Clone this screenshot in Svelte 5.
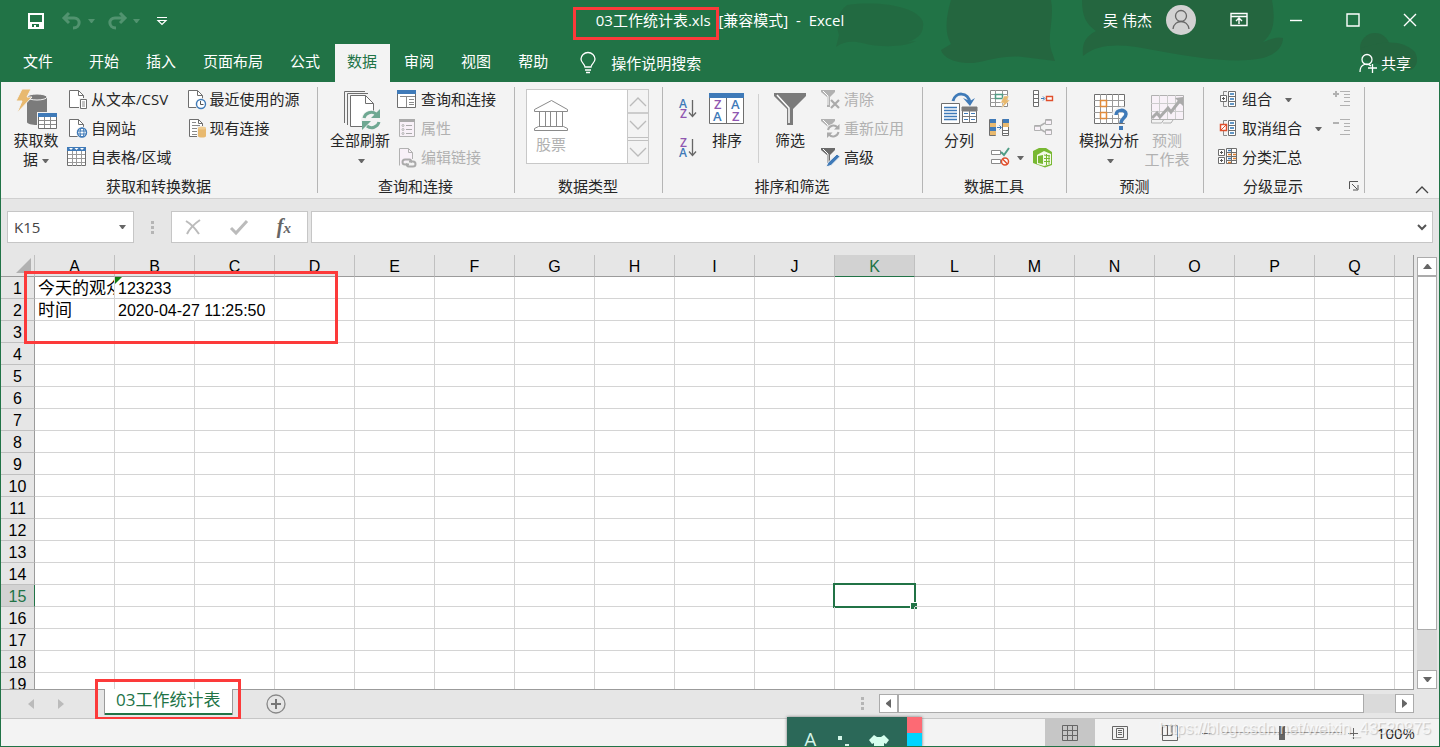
<script lang="ts">
  interface ITool {
    icon: string;
    label: string;
    disabled?: boolean;
    caret?: boolean;
  }

  const tabs = ["文件", "开始", "插入", "页面布局", "公式", "数据", "审阅", "视图", "帮助"];
  const columns = "ABCDEFGHIJKLMNOPQRSTUV".split("");
  const rows = Array.from({ length: 36 }, (_, i) => i + 1);
  const cells: Record<string, string> = {
    A1: "今天的观众",
    B1: "123233",
    A2: "时间",
    B2: "2020-04-27 11:25:50",
  };

  let activeTab = $state("数据");
  let activeCol = $state("K");
  let activeRow = $state(15);
  let view = $state("normal");
  let zoom = $state(100);

  const importTools: ITool[] = [
    { icon: "csv", label: "从文本/CSV" },
    { icon: "web", label: "自网站" },
    { icon: "range", label: "自表格/区域" },
  ];
  const sourceTools: ITool[] = [
    { icon: "recent", label: "最近使用的源" },
    { icon: "existing", label: "现有连接" },
  ];
  const queryTools: ITool[] = [
    { icon: "queries", label: "查询和连接" },
    { icon: "props", label: "属性", disabled: true },
    { icon: "links", label: "编辑链接", disabled: true },
  ];
  const filterTools: ITool[] = [
    { icon: "clear", label: "清除", disabled: true },
    { icon: "reapply", label: "重新应用", disabled: true },
    { icon: "advanced", label: "高级" },
  ];
  const outlineTools: ITool[] = [
    { icon: "group", label: "组合", caret: true },
    { icon: "ungroup", label: "取消组合", caret: true },
    { icon: "subtotal", label: "分类汇总" },
  ];

  const page = `<path d="M3.500 1.500h9l5 5v12h-14z" fill="#fff" stroke="#6e6e6e"/><path d="M12.500 1.500v5h5" fill="none" stroke="#6e6e6e"/>`;
  const funnel = (c: string) =>
    `<path d="M2 1h14v2l-5 5v10H8V8L2 3z" fill="${c}"/><path d="M4 2l5 5v9" fill="none" stroke="#fff"/>`;
  const bracket = `<path d="M10 2.500H6.500V6M6.500 13v4.500H10" fill="none" stroke="#8a8a8a"/><path d="M11.500 2.500h7v15h-7z" fill="#fff" stroke="#6e6e6e"/><path d="M11 7.500h8M11 12.500h8" stroke="#6e6e6e"/><path d="M13 5h4M13 10h4M13 15h4" stroke="#2f75b5" stroke-width="1.300"/>`;

  // 22 x 21 icons
  const small: Record<string, string> = {
    csv: `${page}<path d="M13 9h9v12h-9z" fill="#f3f3f3"/><path d="M14.500 10.500h6v9h-6z" fill="#fff" stroke="#6e6e6e"/><path d="M16 13h3M16 15h3M16 17h3" stroke="#8a8a8a"/>`,
    web: `${page}<circle cx="16" cy="14.500" r="6" fill="#f3f3f3"/><circle cx="16" cy="14.500" r="4.500" fill="#fff" stroke="#3f7ab8" stroke-width="1.400"/><ellipse cx="16" cy="14.500" rx="2" ry="4.500" fill="none" stroke="#3f7ab8"/><path d="M11.500 13h9M11.500 16h9" stroke="#3f7ab8"/>`,
    range: `<path d="M1.500.5h18v18h-18z" fill="#fff" stroke="#6e6e6e"/><path d="M1 0h19v4H1z" fill="#3f7ab8"/><path d="M3 1h4l-2 2zM8.500 1h4l-2 2zM14 1h4l-2 2z" fill="#fff"/><path d="M6.500 4v15M10.500 4v15M15.500 4v15M2 7.500h17M2 11.500h17M2 15.500h17" stroke="#9a9a9a"/>`,
    recent: `${page}<circle cx="16" cy="15" r="6" fill="#f3f3f3"/><circle cx="16" cy="15" r="4.500" fill="#fff" stroke="#3f7ab8" stroke-width="1.400"/><path d="M15.500 12v3.500h3" fill="none" stroke="#555"/>`,
    existing: `<path d="M4.500 1.500h9l4 4v13h-13z" fill="#fff" stroke="#6e6e6e"/><path d="M13.500 1.500v4h4" fill="none" stroke="#6e6e6e"/><path d="M7 4.500h4M7 7.500h8M7 10.500h5M7 13.500h5M7 16.500h5" stroke="#8a8a8a"/><path d="M12 8h10v12H12z" fill="#f3f3f3"/><path d="M13 10v8c0 2 8 2 8 0v-8z" fill="#e8b96f"/><ellipse cx="17" cy="10" rx="4" ry="1.500" fill="#f0cd92"/>`,
    queries: `<path d="M1.500 1.500h18v17h-18z" fill="#fff" stroke="#6e6e6e"/><path d="M1 1h19v4H1z" fill="#3f7ab8"/><path d="M4 7.500h15M10.500 8v10M13 10.500h5M13 13.500h5M13 15.500h5" stroke="#8a8a8a"/>`,
    props: `<path d="M3.500 1.500h15v17h-15z" fill="#f8f1f8" stroke="#b1b1b1"/><path d="M3 1h16v3H3z" fill="#aaa"/><path d="M10 7.500h6M10 11.500h6M10 15.500h6" stroke="#aaa"/><g fill="none" stroke="#b1b1b1"><circle cx="7" cy="7.500" r="1"/><circle cx="7" cy="11.500" r="1"/><circle cx="7" cy="15.500" r="1"/></g>`,
    links: `<path d="M3.500 18.500v-17h9l4 4V12" fill="#f8f1f8" stroke="#b1b1b1"/><path d="M12.500 1.500v4h4" fill="none" stroke="#b1b1b1"/><g fill="none" stroke="#aaa" stroke-width="2"><path d="M13 17.500H9a2.500 2.500 0 010-5h4a2 2 0 012 3"/><path d="M13 14.500h4a2.500 2.500 0 010 5h-4a2 2 0 01-2-3"/></g>`,
    clear: `${funnel("#b1b1b1")}<path d="M12 11l8 8M20 11l-8 8" stroke="#aaa" stroke-width="2.200"/>`,
    reapply: `${funnel("#b1b1b1")}<circle cx="14" cy="13" r="7" fill="#f3f3f3"/><g fill="none" stroke="#aaa" stroke-width="2"><path d="M9 12a5.500 5.500 0 019.500-2.500M19.500 14a5.500 5.500 0 01-9.500 2.500"/></g><path d="M20.500 6v5.500H15zM8 20v-5.500h5.500z" fill="#aaa"/>`,
    advanced: `${funnel("#6a6a6a")}<path d="M7 20l2-4.500L18 7l3 2.500-9 9z" fill="#3f7ab8" stroke="#f3f3f3"/>`,
    group: `${bracket}<path d="M3.500 6.500h6v6h-6z" fill="#fff" stroke="#6e6e6e"/><path d="M5 9.500h3M6.500 8v3" stroke="#555"/>`,
    ungroup: `${bracket}<path d="M3.500 6.500h6v6h-6z" fill="#fff" stroke="#e04f2c" stroke-width="1.500"/><path d="M4 12l5-5" stroke="#e04f2c"/>`,
    subtotal: `<path d="M1.500 2.500h6v6h-6zM1.500 10.500h6v6h-6z" fill="#fff" stroke="#6e6e6e"/><path d="M3 5.500h3M4.500 4v3M3 13.500h3M4.500 12v3" stroke="#555"/><path d="M9.500 1.500h10v15h-10z" fill="#fff" stroke="#6e6e6e"/><path d="M14.500 1v16M9 5.500h11M9 9.500h11M9 13.500h11" stroke="#6e6e6e"/><path d="M11 3.500h3M11 11.500h3" stroke="#3f7ab8" stroke-width="1.500"/><path d="M11 7.500h3M16 7.500h3M11 15.500h3M16 11.500h3" stroke="#e08030" stroke-width="1.500"/>`,
    flash: `<path d="M1.500 1.500h17v16h-17z" fill="#fff" stroke="#8a8a8a"/><path d="M6.500 1v17M1 5.500h18M1 9.500h18M1 13.500h18M13.500 1v17" stroke="#9a9a9a"/><path d="M6.500 5.500h7v4h-7z" fill="#fff" stroke="#4f9d85" stroke-width="1.500"/><path d="M15 7h5l-2 4h3l-9 9 2.500-6h-3z" fill="#e8b96f" stroke="#f3f3f3" stroke-width=".5"/>`,
    dedupe: `<path d="M.5 1.500h6v16h-6zM13.500 1.500h6v16h-6z" fill="#fff" stroke="#6e6e6e"/><path d="M1 1h6v4H1zM1 9h6v4H1zM14 1h6v4h-6z" fill="#3f7ab8"/><path d="M1 5h6v4H1zM1 13h6v4H1zM14 5h6v4h-6z" fill="#e8b96f"/><path d="M14 12.500h6M14 15.500h6" stroke="#6e6e6e"/><path d="M8 9.500h4M10.500 7.500l2 2-2 2" fill="none" stroke="#3f7ab8"/>`,
    validate: `<path d="M2.500 3.500h9v4h-9zM2.500 12.500h9v4h-9z" fill="#fff" stroke="#8a8a8a"/><path d="M12 5l3 3 5-7" fill="none" stroke="#4f9d85" stroke-width="2"/><circle cx="16" cy="14.500" r="3.500" fill="#fff" stroke="#e04f2c" stroke-width="1.500"/><path d="M13.500 12l5 5" stroke="#e04f2c" stroke-width="1.500"/>`,
    consolidate: `<path d="M1.500 1.500h5v16h-5zM1 5.500h6M1 9.500h6M1 13.500h6" fill="#fff" stroke="#6e6e6e"/><path d="M9 9.500h3M11 7.500l2 2-2 2" fill="none" stroke="#3f7ab8"/><path d="M14.500 7.500h6v4h-6z" fill="#fff" stroke="#e04f2c" stroke-width="1.400"/>`,
    relations: `<g fill="#f8f1f8" stroke="#b1b1b1"><path d="M8 8l5-3M8 11l5 3" stroke-width="1.500"/><path d="M2.500 7.500h6v5h-6zM13.500 1.500h6v5h-6zM13.500 11.500h6v5h-6z"/></g><path d="M3 8h5M14 2h5M14 12h5" stroke="#aaa" stroke-width="1.500"/>`,
    model: `<path d="M1 4l6-3h7l6 4v13l-7 2.500L1 16z" fill="#78b832"/><path d="M5 8l7-4 7 3v10l-7 2-7-2z" fill="#f3f9e8"/><path d="M6 9l5-1v9l-5-1z" fill="#78b832"/><path d="M8 10l1-1v5M12 8l6 1M12 11.500h6M12 14.500h6M14.500 7v11M17 8v9" stroke="#78b832" fill="none"/>`,
    expand: `<path d="M1 5h6M4 2v6" stroke="#b1b1b1" stroke-width="2"/><path d="M8 2.500h10M12 5.500h6M12 8.500h6M12 12.500h6M8 16.500h10" stroke="#b1b1b1"/>`,
    collapse: `<path d="M1 5h6" stroke="#b1b1b1" stroke-width="2"/><path d="M8 1.500h10M12 5.500h6M12 8.500h6M12 12.500h6M8 16.500h10" stroke="#b1b1b1"/>`,
    sortAz: `<g font-family="Open Sans, sans-serif" font-size="12" font-weight="600"><text x="3" y="9" fill="#3f7ab8">A</text><text x="4" y="19" fill="#9057b0">Z</text></g><path d="M16.500 1v16M13 13.500l3.500 4 3.500-4" fill="none" stroke="#666" stroke-width="1.300"/>`,
    sortZa: `<g font-family="Open Sans, sans-serif" font-size="12" font-weight="600"><text x="4" y="9" fill="#9057b0">Z</text><text x="3" y="19" fill="#3f7ab8">A</text></g><path d="M16.500 1v16M13 13.500l3.500 4 3.500-4" fill="none" stroke="#666" stroke-width="1.300"/>`,
  };

  // 44 x 44 icons
  const big: Record<string, string> = {
    getData: `<path d="M13 10v25c0 4 20 4 20 0V10z" fill="#7b7b7b"/><ellipse cx="23" cy="10" rx="10" ry="3" fill="#7b7b7b" stroke="#f3f3f3"/><path d="M8 2h9l-4 8h5L3 26l5-12H2z" fill="#e8b96f" stroke="#f3f3f3"/><path d="M23 25h21v19H23z" fill="#f3f3f3"/><path d="M24.500 26.500h18v15h-18z" fill="#fff" stroke="#6e6e6e"/><path d="M24 26h19v4H24z" fill="#3f7ab8"/><path d="M30.500 30v11M36.500 30v11M25 33.500h17M25 37.500h17" stroke="#8a8a8a"/>`,
    refresh: `<path d="M6.500 36V4.500H27M9.500 38V6.500H30" fill="none" stroke="#6e6e6e"/><path d="M12.500 8.500h15l8 8v23h-23z" fill="#fff" stroke="#6e6e6e"/><path d="M27.500 8.500v8h8" fill="none" stroke="#6e6e6e"/><circle cx="33" cy="33" r="10" fill="#f3f3f3"/><g fill="none" stroke="#6fa892" stroke-width="3"><path d="M26 31a7.500 7.500 0 0112-4M41 35a7.500 7.500 0 01-12 4"/></g><path d="M42 22v9h-9zM24 43v-9h9z" fill="#6fa892"/>`,
    sort: `<path d="M4.500 6.500h34v30h-34z" fill="#fff" stroke="#6e6e6e"/><path d="M4 6h35v5H4z" fill="#3f7ab8"/><path d="M21.500 11v26" stroke="#6e6e6e"/><g font-family="Open Sans, sans-serif" font-size="13" font-weight="600"><text x="9" y="22" fill="#9057b0">Z</text><text x="8" y="34" fill="#3f7ab8">A</text><text x="26" y="22" fill="#3f7ab8">A</text><text x="27" y="34" fill="#9057b0">Z</text></g>`,
    filter: `<path d="M6 6h32v3L25 22v16h-6V22L6 9z" fill="#7b7b7b"/><path d="M9 8l12 13v15" fill="none" stroke="#fff" stroke-width="1.500"/>`,
    split: `<path d="M4.500 16.500h18v20h-18z" fill="#fff" stroke="#6e6e6e"/><path d="M7 20.500h13M7 23.500h13M7 26.500h13M7 29.500h13M7 32.500h13" stroke="#3f7ab8" stroke-width="1.300"/><path d="M25.500 21.500h14v14h-14z" fill="#fff" stroke="#6e6e6e"/><path d="M25 20h15v4H25zM32.500 24v12M26 29.500h13" fill="#7b7b7b" stroke="#7b7b7b"/><path d="M27 26.500h4M34 26.500h4M27 32.500h4M34 32.500h4" stroke="#3f7ab8"/><path d="M16 14c2-9 15-10 17 2" fill="none" stroke="#3f7ab8" stroke-width="3"/><path d="M26 11l7 8 5-8-5 3z" fill="#3f7ab8"/>`,
    whatIf: `<path d="M7.500 7.500h30v29h-30z" fill="#fff" stroke="#6e6e6e"/><path d="M13.500 7v30M19.500 7v30M25.500 7v30M31.500 7v30M7 13.500h31M7 19.500h31M7 25.500h31M7 31.500h31" stroke="#9a9a9a"/><path d="M13.500 13.500h6v6h-6zM13.500 25.500h6v6h-6z" fill="#fff" stroke="#e08b3c" stroke-width="1.500"/><path d="M28 28c0-7 12-7 12-1 0 4-5 4-5 9" fill="none" stroke="#f3f3f3" stroke-width="6"/><path d="M29 28c0-6 10-6 10-1 0 4-5 4-5 9" fill="none" stroke="#3f7ab8" stroke-width="3.500"/><path d="M32 39h4v4h-4z" fill="#3f7ab8"/>`,
    forecast: `<path d="M6.500 8.500h32v24h-32z" fill="#f8f1f8" stroke="#b1b1b1"/><path d="M14.500 8v24M22.500 8v24M30.500 8v24M6 16.500h32M6 24.500h32" stroke="#ccc"/><path d="M7 31l5-5 3 4 8-9 3 4 10-13" fill="none" stroke="#aaa" stroke-width="3"/><path d="M38 10v9l-8-8z" fill="#aaa"/><path d="M6.500 33v3h10l2-3M18 36h8l2-3" fill="none" stroke="#b1b1b1"/>`,
  };
</script>

{#snippet caret()}
  <svg class="caret" viewBox="0 0 7 4" aria-hidden="true"><path d="M0 0h7L4 4H3z" fill="currentColor" /></svg>
{/snippet}

{#snippet smallIcon(name: string)}
  <svg class="small-icon" viewBox="0 0 22 21" aria-hidden="true">{@html small[name]}</svg>
{/snippet}

{#snippet bigIcon(name: string)}
  <svg class="big-icon" viewBox="0 0 44 44" aria-hidden="true">{@html big[name]}</svg>
{/snippet}

{#snippet toolList(tools: ITool[])}
  <div class="tools">
    {#each tools as tool (tool.icon)}
      <button class="tool" disabled={tool.disabled}>
        {@render smallIcon(tool.icon)}
        <span>{tool.label}</span>
        {#if tool.caret}{@render caret()}{/if}
      </button>
    {/each}
  </div>
{/snippet}

<div class="window">
  <header>
    <svg class="art" viewBox="0 0 640 82" aria-hidden="true">
      <g fill="#24663f">
        <path d="M48 5c-10 8-12 18-8 30l-3 12c8-6 16-6 26-4 20 5 42 4 54-2l-8 1c12-4 16-10 15-20C120 8 84 0 48 5z" opacity=".7" />
        <path d="M152 0c-6 20-6 34 0 44l-10 6c2 8 16 14 32 13 16-2 30-8 50-6l32 4-2-6c-8-18 2-34-2-55z" />
        <path d="M283 0c0 16 4 24 14 31-12 6-14 14-13 25 16-14 42-12 70-6 42 8 84 14 110 8 14-4 20-12 20-20-8-2-12 2-20 4 12-10 12-24 9-42z" />
        <circle cx="576" cy="48" r="15" />
        <path d="M562 48c24-8 42-8 54 4 4 8 2 14-4 18-20 0-50-8-50-22z" />
      </g>
    </svg>
    <div class="titlebar">
      <div class="quick">
        <button class="save" aria-label="保存">
          <svg width="18" height="18" viewBox="0 0 18 18"><path d="M1 1h16v16H1zM3 3v7h12V3zM5 12v3h2v-2h2v2h3v-3z" fill="#fff" fill-rule="evenodd" /></svg>
        </button>
        <button class="faded undo" aria-label="撤消">
          <svg width="20" height="18" viewBox="0 0 20 18"><path d="M7 1L2 6l5 5M2 6h10c7 0 7 10-1 10" fill="none" stroke="currentColor" stroke-width="3" /></svg>
          {@render caret()}
        </button>
        <button class="faded redo" aria-label="恢复">
          <svg width="20" height="18" viewBox="0 0 20 18"><path d="M13 1l5 5-5 5M18 6H8C1 6 1 16 9 16" fill="none" stroke="currentColor" stroke-width="3" /></svg>
          {@render caret()}
        </button>
        <button class="customize" aria-label="自定义快速访问工具栏">
          <svg width="12" height="10" viewBox="0 0 12 10"><path d="M1 1.500h10M2 4.500h8L6 8.500z" fill="none" stroke="#fff" stroke-width="1.200" /></svg>
        </button>
      </div>
      <h1>03工作统计表.xls&nbsp; [兼容模式]&nbsp; -&nbsp; Excel</h1>
      <div class="account">
        <span>吴 伟杰</span>
        <svg width="30" height="30" viewBox="0 0 30 30" aria-hidden="true"><circle cx="15" cy="15" r="15" fill="#d2d2d2" /><g fill="none" stroke="#666" stroke-width="1.300"><circle cx="15" cy="11" r="5.500" /><path d="M7 24c1-10 15-10 16 0" /></g></svg>
        <div class="controls">
          <button aria-label="功能区显示选项"><svg viewBox="0 0 18 18"><path d="M1 2.500h16v12H1zM1 5.500h16M9 13V7.500M6 10l3-3 3 3" /></svg></button>
          <button aria-label="最小化"><svg viewBox="0 0 18 18"><path d="M3 9.500h12" /></svg></button>
          <button aria-label="最大化"><svg viewBox="0 0 18 18"><path d="M3 3h12v12H3z" /></svg></button>
          <button aria-label="关闭"><svg viewBox="0 0 18 18"><path d="M3 3l12 12M15 3L3 15" /></svg></button>
        </div>
      </div>
    </div>
    <nav>
      {#each tabs as tab (tab)}
        <button class="tab" class:active={tab === activeTab} onclick={() => (activeTab = tab)}>{tab}</button>
      {/each}
      <button class="tell-me">
        <svg width="18" height="22" viewBox="0 0 18 22" aria-hidden="true"><path d="M6 15c0-3-4-4-4-8a7 6.500 0 0114 0c0 4-4 5-4 8zM6 18h6M7 20.500h4" fill="none" stroke="#fff" stroke-width="1.300" /></svg>
        操作说明搜索
      </button>
      <button class="share">
        <svg width="20" height="20" viewBox="0 0 20 20" aria-hidden="true"><path d="M2 19c0-9 8-9 11-6M10 15h9M14.500 11v9" fill="none" stroke="#fff" stroke-width="1.300" /><circle cx="9" cy="6.500" r="5" fill="none" stroke="#fff" stroke-width="1.300" /></svg>
        共享
      </button>
    </nav>
  </header>

  <section class="ribbon">
    <div class="panel import">
      <div class="body">
        <button class="big">{@render bigIcon("getData")}<span>获取数<br />据 {@render caret()}</span></button>
        {@render toolList(importTools)}
        {@render toolList(sourceTools)}
      </div>
      <div class="caption">获取和转换数据</div>
    </div>
    <div class="divider"></div>

    <div class="panel queries">
      <div class="body">
        <button class="big wide">{@render bigIcon("refresh")}<span>全部刷新<br />{@render caret()}</span></button>
        {@render toolList(queryTools)}
      </div>
      <div class="caption">查询和连接</div>
    </div>
    <div class="divider"></div>

    <div class="panel types">
      <div class="gallery">
        <button class="stock" disabled>
          <svg width="36" height="34" viewBox="0 0 36 34" aria-hidden="true"><path d="M1.500 11.500L18.500 2.500l16 9v2h-33zM1.500 32.500v-2l4-2h25l4 2v2zM6.500 14v14M12.500 14v14M17.500 14v14M23.500 14v14M29.500 14v14" fill="none" stroke="#8a8a8a" /></svg>
          <span>股票</span>
        </button>
        <div class="pager">
          <button disabled aria-label="上一行"><svg viewBox="0 0 20 12"><path d="M2 11l8-8 8 8" /></svg></button>
          <button disabled aria-label="下一行"><svg viewBox="0 0 20 12"><path d="M2 2l8 8 8-8" /></svg></button>
          <button disabled aria-label="更多"><svg viewBox="0 0 20 12"><path d="M2 2l8 8 8-8" /></svg></button>
        </div>
      </div>
      <div class="caption">数据类型</div>
    </div>
    <div class="divider"></div>

    <div class="panel sorting">
      <div class="body">
        <div class="sorts">
          <button aria-label="升序">{@render smallIcon("sortAz")}</button>
          <button aria-label="降序">{@render smallIcon("sortZa")}</button>
        </div>
        <button class="big">{@render bigIcon("sort")}<span>排序</span></button>
        <div class="inner-divider"></div>
        <button class="big">{@render bigIcon("filter")}<span>筛选</span></button>
        {@render toolList(filterTools)}
      </div>
      <div class="caption">排序和筛选</div>
    </div>
    <div class="divider"></div>

    <div class="panel data-tools">
      <div class="body">
        <button class="big">{@render bigIcon("split")}<span>分列</span></button>
        <div class="tools">
          <button class="tool" aria-label="快速填充">{@render smallIcon("flash")}</button>
          <button class="tool" aria-label="删除重复值">{@render smallIcon("dedupe")}</button>
          <button class="tool" aria-label="数据验证">{@render smallIcon("validate")}{@render caret()}</button>
        </div>
        <div class="tools">
          <button class="tool" aria-label="合并计算">{@render smallIcon("consolidate")}</button>
          <button class="tool" aria-label="关系" disabled>{@render smallIcon("relations")}</button>
          <button class="tool" aria-label="管理数据模型">{@render smallIcon("model")}</button>
        </div>
      </div>
      <div class="caption">数据工具</div>
    </div>
    <div class="divider"></div>

    <div class="panel forecast">
      <div class="body">
        <button class="big wide">{@render bigIcon("whatIf")}<span>模拟分析<br />{@render caret()}</span></button>
        <button class="big" disabled>{@render bigIcon("forecast")}<span>预测<br />工作表</span></button>
      </div>
      <div class="caption">预测</div>
    </div>
    <div class="divider"></div>

    <div class="panel outline">
      <div class="body">
        {@render toolList(outlineTools)}
        <div class="tools levels">
          <button class="tool" aria-label="显示明细数据" disabled>{@render smallIcon("expand")}</button>
          <button class="tool" aria-label="隐藏明细数据" disabled>{@render smallIcon("collapse")}</button>
        </div>
      </div>
      <div class="caption">
        <span>分级显示</span>
        <button class="launcher" aria-label="分级显示设置">
          <svg width="10" height="10" viewBox="0 0 10 10"><path d="M.5 8V.5H9M3 3l5 5M9 4v5H4" fill="none" stroke="#555" /></svg>
        </button>
      </div>
    </div>
    <div class="divider"></div>

    <button class="fold" aria-label="折叠功能区">
      <svg width="14" height="8" viewBox="0 0 14 8"><path d="M1 7l6-6 6 6" fill="none" stroke="#444" stroke-width="1.300" /></svg>
    </button>
  </section>

  <section class="formula-bar">
    <div class="name-box">
      <input aria-label="名称框" value="{activeCol}{activeRow}" />
      <button aria-label="名称列表">{@render caret()}</button>
    </div>
    <div class="dots"><i></i><i></i><i></i></div>
    <div class="fx">
      <button aria-label="取消"><svg viewBox="0 0 18 18"><path d="M2 3c5 3 9 7 13 13M16 2C10 6 6 10 3 16" fill="none" stroke="#bbb" stroke-width="2" /></svg></button>
      <button aria-label="输入"><svg viewBox="0 0 18 18"><path d="M1 10l5 5L17 3" fill="none" stroke="#bbb" stroke-width="3" /></svg></button>
      <button class="fn" aria-label="插入函数">f<small>x</small></button>
    </div>
    <div class="formula">
      <input aria-label="编辑栏" />
      <button aria-label="展开编辑栏"><svg width="10" height="8" viewBox="0 0 10 8"><path d="M1 2l4 4 4-4" fill="none" stroke="#555" stroke-width="2" /></svg></button>
    </div>
  </section>

  <main>
    <div class="grid">
      <table>
        <thead>
          <tr>
            <th class="corner"><svg width="15" height="15" viewBox="0 0 15 15" aria-hidden="true"><path d="M15 0v15H0z" fill="#b1b1b1" /></svg></th>
            {#each columns as col (col)}
              <th scope="col" class:picked={col === activeCol}>{col}</th>
            {/each}
          </tr>
        </thead>
        <tbody>
          {#each rows as row (row)}
            <tr>
              <th scope="row" class:picked={row === activeRow}>{row}</th>
              {#each columns as col (col)}
                <td
                  class:han={col === "A"}
                  class:flagged={col + row === "B1"}
                  class:spill={col + row === "B2"}
                  class:current={col === activeCol && row === activeRow}
                  onclick={() => {
                    activeCol = col;
                    activeRow = row;
                  }}>{cells[col + row] ?? ""}</td>
              {/each}
            </tr>
          {/each}
        </tbody>
      </table>
      <div class="mark mark-cells"></div>
    </div>
    <div class="vscroll">
      <button aria-label="向上滚动"><svg viewBox="0 0 9 5"><path d="M0 5l4-5h1l4 5z" fill="#666" /></svg></button>
      <div class="thumb"></div>
      <div class="track"></div>
      <button aria-label="向下滚动"><svg viewBox="0 0 9 5"><path d="M0 0h9L5 5H4z" fill="#666" /></svg></button>
    </div>
  </main>

  <footer>
    <div class="sheets">
      <div class="sheet-nav">
        <button aria-label="上一张工作表"><svg width="6" height="10" viewBox="0 0 6 10"><path d="M6 0v10L0 5z" fill="#bbb" /></svg></button>
        <button aria-label="下一张工作表"><svg width="6" height="10" viewBox="0 0 6 10"><path d="M0 0v10l6-5z" fill="#bbb" /></svg></button>
      </div>
      <div class="sheet-slot">
        <button class="sheet">03工作统计表</button>
        <div class="mark mark-sheet"></div>
      </div>
      <button class="add" aria-label="新工作表">
        <svg width="20" height="20" viewBox="0 0 20 20"><circle cx="10" cy="10" r="9" fill="none" stroke="#888" stroke-width="1.300" /><path d="M5 10h10M10 5v10" stroke="#777" stroke-width="2" /></svg>
      </button>
      <div class="dots"><i></i><i></i><i></i></div>
      <div class="hscroll">
        <button aria-label="向左滚动"><svg viewBox="0 0 5 9"><path d="M5 0v9L0 5V4z" fill="#666" /></svg></button>
        <div class="thumb"></div>
        <div class="track"></div>
        <button aria-label="向右滚动"><svg viewBox="0 0 5 9"><path d="M0 0v9l5-4V4z" fill="#666" /></svg></button>
      </div>
    </div>
    <div class="status">
      <button class="view" class:on={view === "normal"} aria-label="普通" onclick={() => (view = "normal")}>
        <svg viewBox="0 0 18 18"><path d="M1.500 1.500h15v15h-15zM6.500 1v16M11.500 1v16M1 6.500h16M1 11.500h16" /></svg>
      </button>
      <button class="view" class:on={view === "layout"} aria-label="页面布局" onclick={() => (view = "layout")}>
        <svg viewBox="0 0 18 18"><path d="M1.500 2.500h15v13h-15zM5.500 4.500h7v9h-7zM7 6.500h4M7 8.500h4M7 10.500h4" /></svg>
      </button>
      <button class="view" class:on={view === "break"} aria-label="分页预览" onclick={() => (view = "break")}>
        <svg viewBox="0 0 18 18"><path d="M1.500 1.500h15v15h-15zM1 11.500h10v-10M6.500 2v9" /></svg>
      </button>
      <button class="step minus" aria-label="缩小" onclick={() => (zoom -= 10)}><svg viewBox="0 0 12 12"><path d="M1 6.500h10" /></svg></button>
      <input type="range" aria-label="显示比例" min="10" max="190" bind:value={zoom} />
      <button class="step" aria-label="放大" onclick={() => (zoom += 10)}><svg viewBox="0 0 12 12"><path d="M1 6.500h10M6.500 1v11" /></svg></button>
      <span class="percent">{zoom}%</span>
      <div class="watermark">https://blog.csdn.net/weixin_43520875</div>
    </div>
    <div class="ime">
      <div class="ime-keys">
        <span>A</span>
        <svg width="18" height="18" viewBox="0 0 18 18" aria-hidden="true"><path d="M4 2h4v4H4zM11 10h4v4h-4z" fill="#d5f5e8" /></svg>
        <svg width="20" height="18" viewBox="0 0 20 18" aria-hidden="true"><path d="M5 1l3 2h4l3-2 5 5-3 4-2-1v9H5V9l-2 1-3-4z" fill="#d5ffee" /></svg>
      </div>
      <div class="ime-side"></div>
    </div>
  </footer>
  <div class="mark mark-title"></div>
</div>

<style>
  :global(body) {
    margin: 0;
    overflow: hidden;
  }

  .window {
    position: relative;
    display: flex;
    flex-direction: column;
    box-sizing: border-box;
    height: 100vh;
    border: 1px solid #217346;
    border-top: 0;
    background: #e6e6e6;
    color: #262626;
    font: 15px/20px "Open Sans", "Noto Sans CJK SC", sans-serif;
    overflow: hidden;
  }
  .window * {
    box-sizing: border-box;
  }
  button,
  input {
    margin: 0;
    padding: 0;
    border: 0;
    background: none;
    color: inherit;
    font: inherit;
  }
  button {
    display: flex;
    align-items: center;
    flex: none;
    white-space: nowrap;
  }
  button:disabled {
    color: #b1b1b1;
  }
  svg {
    display: block;
    flex: none;
    overflow: visible;
  }
  .caret {
    width: 7px;
    height: 4px;
    color: #666;
  }

  /* title bar and tabs */
  header {
    position: relative;
    flex: none;
    height: 82px;
    background: #217346;
    color: #fff;
  }
  .art {
    position: absolute;
    top: 0;
    right: 0;
    width: 640px;
    height: 82px;
    overflow: hidden;
  }
  .titlebar {
    position: relative;
    display: flex;
    align-items: center;
    height: 40px;
  }
  .quick {
    display: flex;
    align-items: center;
    flex: 1 1 0;
    padding-top: 2px;
  }
  .save {
    margin-left: 26px;
  }
  .faded {
    gap: 6px;
    color: #51936f;
  }
  .faded .caret {
    color: #51936f;
  }
  .undo {
    margin-left: 17px;
  }
  .redo {
    margin-left: 12px;
  }
  .customize {
    margin-left: 16px;
  }
  h1 {
    margin: 0;
    font-size: 15px;
    font-weight: 400;
    white-space: nowrap;
  }
  .account {
    display: flex;
    align-items: center;
    justify-content: flex-end;
    flex: 1 1 0;
    gap: 14px;
    white-space: nowrap;
  }
  .controls {
    display: flex;
    margin-right: 1px;
  }
  .controls button {
    justify-content: center;
    width: 57px;
    height: 40px;
  }
  .controls svg {
    width: 18px;
    height: 18px;
    fill: none;
    stroke: #fff;
    stroke-width: 1.4;
  }
  nav {
    position: relative;
    display: flex;
    align-items: stretch;
    gap: 2px;
    height: 42px;
    padding: 4px 28px 0 10px;
  }
  .tab {
    padding: 0 13px 5px 12px;
  }
  .tab:first-child {
    margin-right: 9px;
  }
  .tab.active {
    background: #f3f3f3;
    color: #217346;
  }
  .tell-me {
    gap: 14px;
    margin-left: 16px;
  }
  .share {
    gap: 3px;
    margin-left: auto;
  }

  /* ribbon */
  .ribbon {
    display: flex;
    flex: none;
    height: 117px;
    border-bottom: 1px solid #d0d0d0;
    background: #f3f3f3;
  }
  .divider {
    flex: none;
    width: 1px;
    margin: 5px 0;
    background: #b5b5b5;
  }
  .panel {
    display: flex;
    flex-direction: column;
    flex: none;
    padding-top: 3px;
  }
  .import {
    width: 316px;
  }
  .queries {
    width: 196px;
  }
  .types {
    width: 147px;
  }
  .sorting {
    width: 259px;
  }
  .data-tools {
    width: 143px;
  }
  .forecast {
    width: 136px;
  }
  .outline {
    width: 160px;
  }
  .body {
    display: flex;
    flex: none;
    gap: 4px;
    height: 87px;
    padding-left: 10px;
  }
  .import .body {
    padding-left: 9px;
  }
  .caption {
    display: flex;
    align-items: center;
    justify-content: center;
    flex: none;
    height: 26px;
    padding: 2px 1px 0 0;
  }
  .big {
    flex-direction: column;
    width: 52px;
    padding-top: 2px;
    line-height: 19px;
    text-align: center;
  }
  .big.wide {
    width: 64px;
  }
  .big .caret {
    display: inline-block;
    vertical-align: middle;
  }
  .big.wide .caret {
    margin-left: 3px;
  }
  .big-icon {
    width: 44px;
    height: 44px;
  }
  .small-icon {
    width: 22px;
    height: 21px;
  }
  .tools {
    display: flex;
    flex-direction: column;
    flex: none;
  }
  .tool {
    gap: 3px;
    height: 29px;
  }
  .tool span {
    padding-bottom: 2px;
  }
  .import .tools + .tools {
    margin-left: 9px;
  }
  .gallery {
    display: flex;
    flex: none;
    height: 75px;
    margin: 4px 13px 8px 11px;
    border: 1px solid #c8c8c8;
    background: #fff;
  }
  .stock {
    flex: 1;
    flex-direction: column;
    align-items: flex-start;
    gap: 2px;
    padding: 8px 0 0 6px;
  }
  .stock span {
    padding-left: 3px;
  }
  .pager {
    display: flex;
    flex-direction: column;
    width: 21px;
    border-left: 1px solid #c8c8c8;
    background: #f3f3f3;
  }
  .pager button {
    flex: 1;
    justify-content: center;
  }
  .pager button + button {
    border-top: 2px solid #ccc;
  }
  .pager button:last-child {
    border-top: 4px double #c0c0c0;
  }
  .pager svg {
    width: 20px;
    height: 12px;
    fill: none;
    stroke: #bbb;
    stroke-width: 1.3;
  }
  .sorting .body {
    gap: 0;
    padding-left: 13px;
  }
  .sorting .tools {
    margin-left: 3px;
  }
  .sorts {
    display: flex;
    flex-direction: column;
    gap: 18px;
    padding: 14px 3px 0 0;
  }
  .inner-divider {
    width: 1px;
    margin: 9px 5px;
    background: #d0d0d0;
  }
  .data-tools .tools {
    width: 39px;
  }
  .data-tools .tool {
    gap: 6px;
  }
  .forecast .body {
    gap: 0;
  }
  .outline .body {
    padding-left: 13px;
  }
  .outline .caret {
    margin-left: 10px;
  }
  .outline .levels {
    margin-left: 6px;
  }
  .outline .caption {
    gap: 46px;
    padding-left: 35px;
  }
  .fold {
    align-self: flex-end;
    margin: 0 10px 4px auto;
  }

  /* formula bar */
  .formula-bar {
    display: flex;
    flex: none;
    height: 32px;
    margin: 12px 6px;
  }
  .name-box,
  .fx,
  .formula {
    display: flex;
    align-items: center;
    border: 1px solid #c6c6c6;
    background: #fff;
  }
  .name-box {
    width: 127px;
    padding: 0 7px 0 6px;
  }
  .name-box input,
  .formula input {
    flex: 1;
    min-width: 0;
    color: #444;
  }
  .formula input {
    padding-left: 7px;
  }
  .dots {
    display: flex;
    flex-direction: column;
    align-items: center;
    justify-content: center;
    gap: 2px;
    width: 37px;
  }
  .dots i {
    width: 3px;
    height: 3px;
    background: #b5b5b5;
  }
  .fx {
    width: 137px;
    justify-content: space-between;
    padding: 0 16px 0 12px;
  }
  .fx svg {
    width: 18px;
    height: 18px;
  }
  .fn {
    align-items: baseline;
    font: italic bold 20px/24px "Liberation Serif", serif;
    color: #666;
  }
  .fn small {
    font-size: 15px;
  }
  .formula {
    flex: 1;
    margin-left: 3px;
    padding-right: 5px;
  }

  /* worksheet */
  main {
    display: flex;
    flex: 1;
    min-height: 0;
  }
  .grid {
    position: relative;
    flex: 1;
    min-width: 0;
    border-right: 1px solid #9b9b9b;
    overflow: hidden;
  }
  table {
    width: 1794px;
    border-spacing: 0;
    table-layout: fixed;
    background: #fff;
    color: #000;
    font: 16px/18px "Liberation Sans", "Noto Sans CJK SC", sans-serif;
  }
  th {
    width: 80px;
    height: 22px;
    padding: 3px 0 0;
    border-right: 1px solid #c0c0c0;
    border-bottom: 1px solid #9b9b9b;
    background: #e6e6e6;
    font-weight: 400;
  }
  th.corner {
    width: 34px;
    padding: 0 3px 3px 15px;
    vertical-align: bottom;
  }
  tbody th {
    border-right-color: #9b9b9b;
    border-bottom-color: #c0c0c0;
  }
  th.picked {
    background: #d2d2d2;
    color: #217346;
  }
  thead th.picked {
    border-bottom-color: #217346;
  }
  tbody th.picked {
    border-right-color: #217346;
  }
  td {
    position: relative;
    height: 22px;
    padding: 3px 0 0 3px;
    border-right: 1px solid #d4d4d4;
    border-bottom: 1px solid #d4d4d4;
    white-space: nowrap;
  }
  td.han {
    font-size: 17px;
    overflow: hidden;
  }
  td.spill {
    border-right-color: transparent;
  }
  td.flagged::before {
    content: "";
    position: absolute;
    top: 0;
    left: 0;
    border-top: 7px solid #107c10;
    border-right: 7px solid transparent;
  }
  td.current::before {
    content: "";
    position: absolute;
    inset: -2px;
    border: 2px solid #217346;
  }
  td.current::after {
    content: "";
    position: absolute;
    right: -3px;
    bottom: -3px;
    width: 6px;
    height: 6px;
    border: 1px solid #fff;
    border-width: 1px 0 0 1px;
    background: #217346;
  }
  .vscroll {
    display: flex;
    flex-direction: column;
    width: 20px;
    margin: 2px 2px 0 3px;
  }
  .vscroll button,
  .hscroll button,
  .thumb {
    border: 1px solid #ababab;
    background: #fff;
  }
  .vscroll button {
    justify-content: center;
    height: 19px;
  }
  .vscroll svg {
    width: 9px;
    height: 5px;
  }
  .vscroll .thumb {
    flex: 355;
  }
  .vscroll .track {
    flex: 40;
  }
  .track {
    background: #dadada;
  }

  /* sheet tabs and status bar */
  footer {
    position: relative;
    flex: none;
  }
  .sheets {
    display: flex;
    height: 30px;
    border-bottom: 1px solid #c6c6c6;
    background: linear-gradient(#9b9b9b 1px, transparent 1px) no-repeat;
    background-size: calc(100% - 25px) 100%;
  }
  .sheet-nav {
    display: flex;
    justify-content: space-between;
    width: 103px;
    padding: 0 40px 0 27px;
  }
  .sheet-slot {
    position: relative;
    height: 26px;
  }
  .sheet {
    height: 26px;
    padding: 0 12px 4px 11px;
    border: solid #9b9b9b;
    border-width: 0 1px;
    background: #fff;
    box-shadow: inset 0 -2px #217346;
    color: #217346;
    font-size: 17px;
  }
  .add {
    margin: 0 auto 0 33px;
  }
  .sheets .dots {
    width: 33px;
  }
  .hscroll {
    display: flex;
    width: 37.2%;
    margin: 5px 25px 5px 0;
  }
  .hscroll button {
    justify-content: center;
    width: 19px;
  }
  .hscroll svg {
    width: 5px;
    height: 9px;
  }
  .hscroll .thumb {
    flex: 467;
  }
  .hscroll .track {
    flex: 31;
  }
  .status {
    position: relative;
    display: flex;
    align-items: center;
    justify-content: flex-end;
    height: 27px;
    padding-right: 24px;
    background: #f3f3f3;
  }
  .view {
    justify-content: center;
    width: 50px;
    height: 27px;
  }
  .view.on {
    background: #c6c6c6;
  }
  .status svg {
    width: 18px;
    height: 18px;
    fill: none;
    stroke: #666;
  }
  .status .step svg {
    width: 12px;
    height: 12px;
  }
  .minus {
    margin-left: 6px;
  }
  input[type="range"] {
    appearance: none;
    width: 120px;
    height: 16px;
    margin: 0 5px 0 9px;
    background: linear-gradient(#999, #999) center / 100% 1px no-repeat;
  }
  input[type="range"]::-webkit-slider-thumb {
    appearance: none;
    width: 6px;
    height: 14px;
    background: #666;
  }
  .percent {
    width: 56px;
    text-align: right;
  }
  .watermark {
    position: absolute;
    top: 0;
    right: 8px;
    color: rgba(255, 255, 255, 0.7);
    text-shadow: 1px 1px 1px rgba(0, 0, 0, 0.2);
    font: 16px/20px "Liberation Sans", sans-serif;
    pointer-events: none;
  }
  .ime {
    position: absolute;
    bottom: -1px;
    left: 786px;
    display: flex;
    height: 30px;
    box-shadow: 0 0 3px #777;
  }
  .ime-keys {
    display: flex;
    align-items: flex-end;
    gap: 17px;
    width: 120px;
    height: 30px;
    padding-left: 17px;
    background: #2b6858;
    color: #d5f5e8;
    font-size: 20px;
    overflow: hidden;
  }
  .ime-keys span {
    line-height: 14px;
  }
  .ime-keys svg {
    margin-bottom: -5px;
  }
  .ime-side {
    width: 15px;
    background: linear-gradient(#fd6a74 16px, #00d4ff 16px);
  }

  /* callout frames */
  .mark {
    position: absolute;
    border: 3px solid #fc3a3a;
    pointer-events: none;
  }
  .mark-title {
    top: 7px;
    left: calc(50% - 147px);
    width: 146px;
    height: 33px;
  }
  .mark-cells {
    top: 16px;
    left: 23px;
    width: 314px;
    height: 73px;
  }
  .mark-sheet {
    inset: -10px -8px -5px -9px;
  }
</style>
